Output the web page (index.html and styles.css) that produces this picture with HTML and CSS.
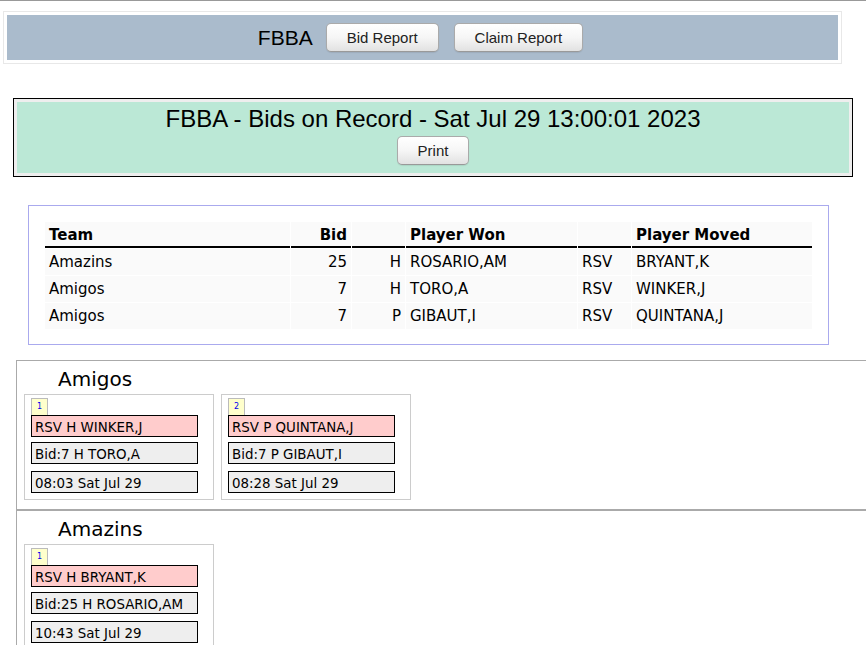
FILE: index.html
```html
<!DOCTYPE html>
<html>
<head>
<meta charset="utf-8">
<title>FBBA - Bids on Record</title>
<link rel="stylesheet" href="styles.css">
</head>
<body>
<div class="topline"></div>
<div class="nav-outer">
  <div class="nav">
    <span class="brand">FBBA</span>
    <button class="btn btn-first">Bid Report</button>
    <button class="btn btn-second">Claim Report</button>
  </div>
</div>

<div class="title-box">
  <div class="title-inner">
    <div class="title-text">FBBA - Bids on Record - Sat Jul 29 13:00:01 2023</div>
    <button class="btn btn-print">Print</button>
  </div>
</div>

<div class="table-box">
  <table class="bids">
    <colgroup>
      <col class="c-team"><col class="c-bid"><col class="c-pos"><col class="c-won"><col class="c-rsv"><col class="c-moved">
    </colgroup>
    <thead>
      <tr><th>Team</th><th class="num">Bid</th><th></th><th>Player Won</th><th></th><th>Player Moved</th></tr>
    </thead>
    <tbody>
      <tr><td>Amazins</td><td class="num">25</td><td class="num">H</td><td>ROSARIO,AM</td><td>RSV</td><td>BRYANT,K</td></tr>
      <tr><td>Amigos</td><td class="num">7</td><td class="num">H</td><td>TORO,A</td><td>RSV</td><td>WINKER,J</td></tr>
      <tr><td>Amigos</td><td class="num">7</td><td class="num">P</td><td>GIBAUT,I</td><td>RSV</td><td>QUINTANA,J</td></tr>
    </tbody>
  </table>
</div>

<div class="team-section">
  <div class="team-name">Amigos</div>
  <div class="cards">
    <div class="card">
      <div class="badge">1</div>
      <div class="box box-moved">RSV H WINKER,J</div>
      <div class="box box-bid">Bid:7 H TORO,A</div>
      <div class="box box-time">08:03 Sat Jul 29</div>
    </div>
    <div class="card">
      <div class="badge">2</div>
      <div class="box box-moved">RSV P QUINTANA,J</div>
      <div class="box box-bid">Bid:7 P GIBAUT,I</div>
      <div class="box box-time">08:28 Sat Jul 29</div>
    </div>
  </div>
</div>

<div class="team-section">
  <div class="team-name">Amazins</div>
  <div class="cards">
    <div class="card">
      <div class="badge">1</div>
      <div class="box box-moved">RSV H BRYANT,K</div>
      <div class="box box-bid">Bid:25 H ROSARIO,AM</div>
      <div class="box box-time">10:43 Sat Jul 29</div>
    </div>
  </div>
</div>
</body>
</html>
```

FILE: styles.css
```css
html {
  scrollbar-width: none;
}
body {
  margin: 0;
  overflow-x: hidden;
  background: #fff;
  color: #000;
  font-family: "Liberation Sans", Arial, sans-serif;
}
.topline {
  height: 1px;
  background: #999;
}
.nav-outer {
  box-sizing: border-box;
  width: 839px;
  margin: 10px 0 0 3px;
  border: 1px solid #e8e8e8;
  padding: 3px;
}
.nav {
  height: 45px;
  background: #aabbcc;
  display: flex;
  align-items: center;
  justify-content: center;
  padding-right: 4px;
}
.brand {
  font-size: 21px;
  line-height: 24px;
}
.btn {
  box-sizing: border-box;
  height: 29px;
  padding: 0 20px;
  font-family: "Liberation Sans", Arial, sans-serif;
  font-size: 15px;
  color: #222;
  border: 1px solid #aaa;
  border-bottom-color: #999;
  border-radius: 5px;
  background: linear-gradient(to bottom, #ffffff 0%, #f6f6f6 50%, #e2e2e2 100%);
  box-shadow: 0 1px 1px rgba(0,0,0,0.08);
}
.btn-first {
  margin-left: 13px;
}
.btn-second {
  margin-left: 15px;
}
.title-box {
  box-sizing: border-box;
  width: 840px;
  margin: 34px 0 0 13px;
  border: 1px solid #000;
  padding: 3px;
  background: #eeeeee;
}
.title-inner {
  height: 71px;
  box-sizing: border-box;
  background: #bbe8d6;
  text-align: center;
  padding-top: 3px;
}
.title-text {
  font-size: 24px;
  line-height: 28px;
}
.btn-print {
  margin-top: 3px;
}
.table-box {
  box-sizing: border-box;
  width: 801px;
  margin: 28px 0 0 28px;
  border: 1px solid #aaaaee;
  padding: 15px 15px 14px;
}
.bids {
  width: 100%;
  table-layout: fixed;
  border-spacing: 1px;
  font-family: "DejaVu Sans", Verdana, sans-serif;
  font-size: 15px;
}
.c-team { width: 245px; }
.c-bid { width: 60px; }
.c-pos { width: 53px; }
.c-won { width: 171px; }
.c-rsv { width: 53px; }
.bids th {
  background: #fafafa;
  text-align: left;
  font-weight: bold;
  padding: 4px 4px 1px;
  line-height: 19px;
  border-bottom: 2px solid #000;
}
.bids td {
  background: #fafafa;
  padding: 3px 4px;
  line-height: 20px;
  white-space: nowrap;
}
.bids .num {
  text-align: right;
}
.team-section {
  margin: 15px -40px 0 16px;
  border: 1px solid #aaa;
  padding: 7px 0 9px 7px;
  font-family: "DejaVu Sans", Verdana, sans-serif;
}
.team-section + .team-section {
  margin-top: 0;
}
.team-name {
  font-size: 20px;
  line-height: 23px;
  margin: 0 0 3px 34px;
}
.cards {
  display: flex;
  gap: 7px;
}
.card {
  box-sizing: border-box;
  width: 190px;
  border: 1px solid #ccc;
  padding: 3px 15px 6px 6px;
}
.badge {
  box-sizing: border-box;
  width: 17px;
  height: 17px;
  background: #ffffcc;
  border: 1px solid #bbb;
  border-bottom: none;
  color: #0000ee;
  font-size: 8px;
  line-height: 16px;
  text-align: center;
}
.box {
  box-sizing: border-box;
  height: 22px;
  border: 1px solid #000;
  padding: 2px 3px 0;
  font-size: 13.4px;
  line-height: 19px;
  white-space: nowrap;
  overflow: hidden;
}
.box-moved {
  background: #ffcccc;
}
.box-bid {
  background: #eeeeee;
  margin-top: 5px;
}
.box-time {
  background: #eeeeee;
  margin-top: 7px;
}
```
